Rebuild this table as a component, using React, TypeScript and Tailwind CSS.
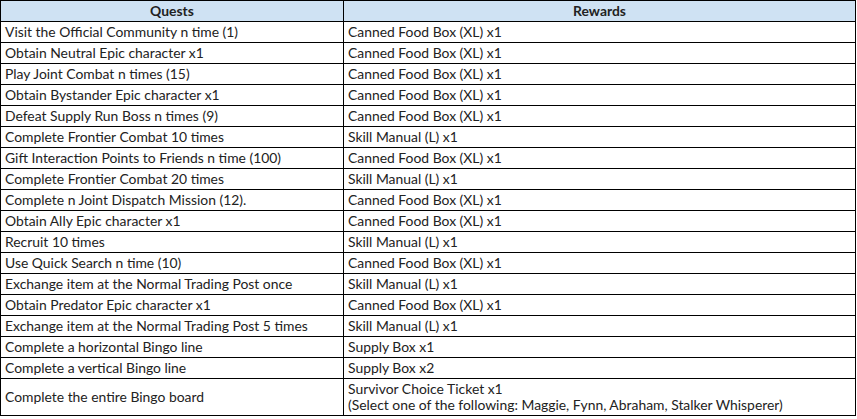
const rows: [string, string][] = [
  ["Visit the Official Community n time (1)", "Canned Food Box (XL) x1"],
  ["Obtain Neutral Epic character x1", "Canned Food Box (XL) x1"],
  ["Play Joint Combat n times (15)", "Canned Food Box (XL) x1"],
  ["Obtain Bystander Epic character x1", "Canned Food Box (XL) x1"],
  ["Defeat Supply Run Boss n times (9)", "Canned Food Box (XL) x1"],
  ["Complete Frontier Combat 10 times", "Skill Manual (L) x1"],
  ["Gift Interaction Points to Friends n time (100)", "Canned Food Box (XL) x1"],
  ["Complete Frontier Combat 20 times", "Skill Manual (L) x1"],
  ["Complete n Joint Dispatch Mission (12).", "Canned Food Box (XL) x1"],
  ["Obtain Ally Epic character x1", "Canned Food Box (XL) x1"],
  ["Recruit 10 times", "Skill Manual (L) x1"],
  ["Use Quick Search n time (10)", "Canned Food Box (XL) x1"],
  ["Exchange item at the Normal Trading Post once", "Skill Manual (L) x1"],
  ["Obtain Predator Epic character x1", "Canned Food Box (XL) x1"],
  ["Exchange item at the Normal Trading Post 5 times", "Skill Manual (L) x1"],
  ["Complete a horizontal Bingo line", "Supply Box x1"],
  ["Complete a vertical Bingo line", "Supply Box x2"],
];

export default function App() {
  return (
    <div className="bg-white w-[857px] h-[419px] font-['Lato',sans-serif] text-[13.9px] text-[#222]">
      <table className="w-[856px] border-collapse table-fixed">
        <colgroup>
          <col className="w-[343px]" />
          <col />
        </colgroup>
        <thead>
          <tr className="bg-[#cfe2f3] h-[21px]">
            <th className="border border-black font-bold text-center leading-4 py-0">Quests</th>
            <th className="border border-black font-bold text-center leading-4 py-0">Rewards</th>
          </tr>
        </thead>
        <tbody>
          {rows.map(([q, r]) => (
            <tr key={q} className="h-[21px]">
              <td className="border border-black px-1 leading-4">{q}</td>
              <td className="border border-black px-1 leading-4">{r}</td>
            </tr>
          ))}
          <tr className="h-[37px]">
            <td className="border border-black px-1 leading-4">Complete the entire Bingo board</td>
            <td className="border border-black px-1 leading-4">
              Survivor Choice Ticket x1
              <br />
              (Select one of the following: Maggie, Fynn, Abraham, Stalker Whisperer)
            </td>
          </tr>
        </tbody>
      </table>
    </div>
  );
}
